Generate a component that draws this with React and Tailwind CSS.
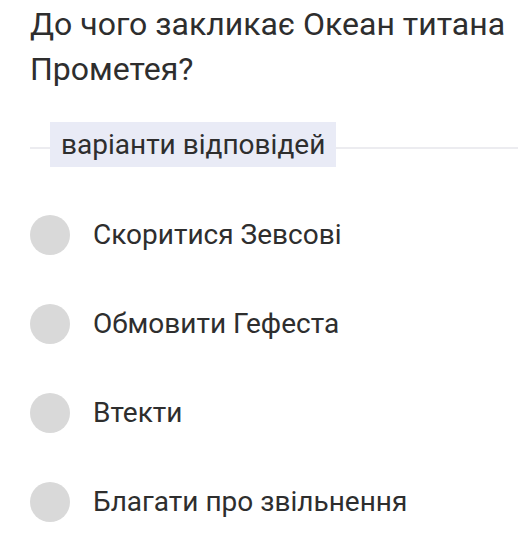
import React from 'react';

const options = [
  'Скоритися Зевсові',
  'Обмовити Гефеста',
  'Втекти',
  'Благати про звільнення',
];

const App = () => {
  return (
    <div className="w-[518px] h-[540px] bg-white overflow-hidden font-['Roboto',sans-serif] text-[#2e2e2e]">
      <h1 className="pl-[30px] pt-[2px] text-[32px] leading-[45px] font-normal">
        До чого закликає Океан титана Прометея?
      </h1>
      <div className="flex items-start pl-[30px] mt-[30px]">
        <div className="w-[20px] h-[2px] mt-[25px] bg-[#ececf0]" />
        <span className="bg-[#e9ebf6] px-[11px] h-[45px] flex items-center text-[28px]">
          варіанти відповідей
        </span>
        <div className="flex-1 h-[2px] mt-[25px] bg-[#ececf0]" />
      </div>
      <div className="flex flex-col pl-[30px] mt-[48px] gap-[49px]">
        {options.map((opt) => (
          <div key={opt} className="flex items-center h-[40px]">
            <div className="w-[40px] h-[40px] rounded-full bg-[#d9d9d9]" />
            <span className="ml-[23px] text-[28px]">{opt}</span>
          </div>
        ))}
      </div>
    </div>
  );
};

export default App;
